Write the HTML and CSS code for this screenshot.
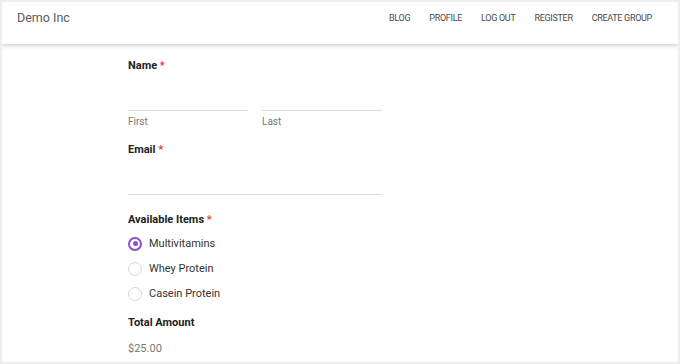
FILE: index.html
```html
<!DOCTYPE html>
<html>
<head>
<meta charset="utf-8">
<link rel="stylesheet" href="styles.css">
</head>
<body>
<div class="frame">
  <header class="topbar">
    <div class="brand">Demo Inc</div>
    <nav class="nav">
      <a>BLOG</a>
      <a>PROFILE</a>
      <a>LOG OUT</a>
      <a>REGISTER</a>
      <a>CREATE GROUP</a>
    </nav>
  </header>
  <main class="form">
    <div class="label name-label">Name <span class="req">*</span></div>
    <div class="name-row">
      <div class="field">
        <div class="line"></div>
        <div class="sub">First</div>
      </div>
      <div class="field">
        <div class="line"></div>
        <div class="sub">Last</div>
      </div>
    </div>
    <div class="label email-label">Email <span class="req">*</span></div>
    <div class="line email-line"></div>
    <div class="label items-label">Available Items <span class="req">*</span></div>
    <div class="radios">
      <div class="radio checked"><span class="dot"></span>Multivitamins</div>
      <div class="radio"><span class="dot"></span>Whey Protein</div>
      <div class="radio"><span class="dot"></span>Casein Protein</div>
    </div>
    <div class="label total-label">Total Amount</div>
    <div class="amount">$25.00</div>
  </main>
</div>
</body>
</html>
```
FILE: styles.css
```css
html, body {
  margin: 0;
  padding: 0;
  background: #fff;
}
.frame {
  box-sizing: border-box;
  width: 680px;
  height: 364px;
  border: 2px solid #eeeeee;
  background: #fff;
  font-family: Roboto, "Liberation Sans", sans-serif;
  overflow: hidden;
}
.topbar {
  height: 42px;
  box-sizing: border-box;
  padding: 6px 26px 0 15px;
  display: flex;
  justify-content: space-between;
  align-items: flex-start;
  box-shadow: 0 2px 4px rgba(0, 0, 0, 0.18);
  position: relative;
}
.brand {
  font-size: 12.5px;
  line-height: 20px;
  color: #5a5a5a;
}
.nav {
  display: flex;
  gap: 19px;
  font-size: 9px;
  letter-spacing: -0.3px;
  line-height: 20px;
  color: #4a4a4a;
}
.form {
  margin-left: 126px;
  width: 254px;
}
.label {
  font-size: 11px;
  font-weight: 700;
  line-height: 16px;
  color: #222;
}
.req {
  color: #e53935;
}
.name-label {
  margin-top: 14px;
}
.name-row {
  display: flex;
  gap: 14px;
}
.field {
  flex: 1;
}
.line {
  height: 33px;
  border-bottom: 1px solid #dcdcdc;
}
.name-row .line {
  margin-top: 3px;
}
.sub {
  margin-top: 4px;
  font-size: 10px;
  line-height: 14px;
  color: #777;
}
.email-label {
  margin-top: 13px;
}
.email-line {
  margin-top: 3px;
}
.items-label {
  margin-top: 17px;
}
.radios {
  margin-top: 3px;
  display: flex;
  flex-direction: column;
}
.radio {
  display: flex;
  align-items: center;
  height: 25px;
  font-size: 11px;
  color: #333;
}
.dot {
  box-sizing: border-box;
  width: 14px;
  height: 14px;
  border-radius: 50%;
  border: 1px solid #d6d6d6;
  margin-right: 7px;
  position: relative;
}
.radio.checked .dot {
  border: 2px solid #8a4fd0;
}
.radio.checked .dot::after {
  content: "";
  position: absolute;
  left: 2.5px;
  top: 2.5px;
  width: 5px;
  height: 5px;
  border-radius: 50%;
  background: #8a4fd0;
}
.total-label {
  margin-top: 9px;
}
.amount {
  margin-top: 10px;
  font-size: 11px;
  line-height: 16px;
  color: #777;
}
```
